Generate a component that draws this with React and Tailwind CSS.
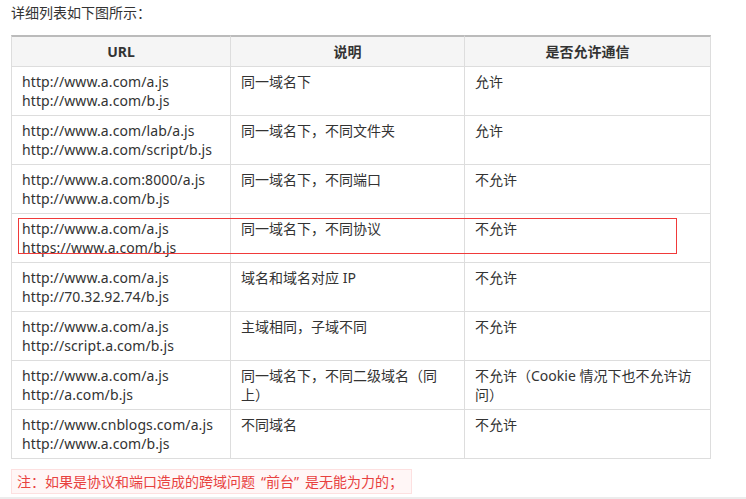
const rows = [
  { urls: ["http://www.a.com/a.js", "http://www.a.com/b.js"], desc: "同一域名下", allow: "允许" },
  { urls: ["http://www.a.com/lab/a.js", "http://www.a.com/script/b.js"], desc: "同一域名下，不同文件夹", allow: "允许" },
  { urls: ["http://www.a.com:8000/a.js", "http://www.a.com/b.js"], desc: "同一域名下，不同端口", allow: "不允许" },
  { urls: ["http://www.a.com/a.js", "https://www.a.com/b.js"], desc: "同一域名下，不同协议", allow: "不允许" },
  { urls: ["http://www.a.com/a.js", "http://70.32.92.74/b.js"], desc: "域名和域名对应 IP", allow: "不允许" },
  { urls: ["http://www.a.com/a.js", "http://script.a.com/b.js"], desc: "主域相同，子域不同", allow: "不允许" },
  { urls: ["http://www.a.com/a.js", "http://a.com/b.js"], desc: "同一域名下，不同二级域名（同上）", allow: "不允许（Cookie 情况下也不允许访问）" },
  { urls: ["http://www.cnblogs.com/a.js", "http://www.a.com/b.js"], desc: "不同域名", allow: "不允许" },
];

const th = "border-t-2 border-t-[#bbb] border-b border-r border-b-[#ddd] border-r-[#ddd] bg-[#f5f5f5] px-[10px] py-[5px] text-center font-bold";
const td = "border-b border-r border-[#ddd] px-[10px] py-[5px] h-[49px] align-top";

export default function App() {
  return (
    <div
      className="relative w-[746px] h-[499px] overflow-hidden bg-white text-[14px] leading-[19px] text-[#333]"
      style={{ fontFamily: '"Noto Sans", "Noto Sans CJK SC", sans-serif' }}
    >
      <div className="pl-[11px] pt-[3px]">
        <p>详细列表如下图所示：</p>

        <table className="mt-[13px] w-[700px] table-fixed border-separate border-spacing-0">
          <thead>
            <tr>
              <th className={th + " w-[220px] border-l border-l-[#ddd]"}>URL</th>
              <th className={th + " w-[234px]"}>说明</th>
              <th className={th + " w-[246px]"}>是否允许通信</th>
            </tr>
          </thead>
          <tbody>
            {rows.map((r, i) => (
              <tr key={i}>
                <td className={td + " border-l tracking-[0.1px]"}>
                  {r.urls.map((u) => (
                    <div key={u} className="whitespace-nowrap">{u}</div>
                  ))}
                </td>
                <td className={td}>{r.desc}</td>
                <td className={td}>{r.allow}</td>
              </tr>
            ))}
          </tbody>
        </table>

        {/* note */}
        <p className="mt-[10px] w-[401px] whitespace-nowrap border border-[#fde0e0] bg-[#fff6f6] px-[5px] py-[2px] text-[#e8413f]">
          注：如果是协议和端口造成的跨域问题<span className="ml-[6px]">“</span>前台<span className="mr-[6px]">”</span>是无能为力的；
        </p>
      </div>

      {/* red highlight over row 4 */}
      <div className="absolute left-[18px] top-[218px] w-[659px] h-[36px] border border-[#f03a3a]" />

      <div className="absolute left-0 bottom-0 w-full h-[2px] bg-[#ececec]" />
    </div>
  );
}
